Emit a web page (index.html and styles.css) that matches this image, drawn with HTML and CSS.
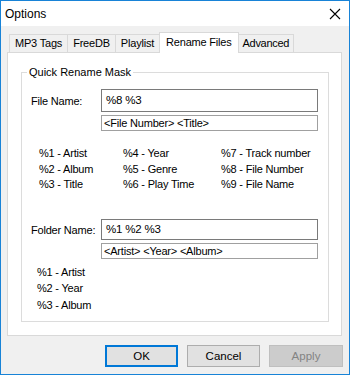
FILE: index.html
```html
<!DOCTYPE html>
<html lang="en">
<head>
  <meta charset="UTF-8">
  <title>Options</title>
  <link rel="stylesheet" href="styles.css">
</head>
<body>

  <div class="window">
    <div class="titlebar">
      <span class="title">Options</span>
      <svg class="close" width="12" height="12" viewBox="0 0 12 12">
        <path d="M1 1 L11 11 M11 1 L1 11" stroke="#000" stroke-width="1.1" fill="none"/>
      </svg>
    </div>

    <div class="client">
      <div class="tabs">
        <div class="tab">MP3 Tags</div>
        <div class="tab">FreeDB</div>
        <div class="tab">Playlist</div>
        <div class="tab active">Rename Files</div>
        <div class="tab">Advanced</div>
      </div>

      <div class="panel">
        <fieldset class="group">
          <legend>Quick Rename Mask</legend>

          <div class="field-row">
            <label>File Name:</label>
            <div class="fields">
              <div class="input">%8 %3</div>
              <div class="preview">&lt;File Number&gt; &lt;Title&gt;</div>
            </div>
          </div>

          <div class="codes codes-file">
            <span>%1 - Artist</span><span>%4 - Year</span><span>%7 - Track number</span>
            <span>%2 - Album</span><span>%5 - Genre</span><span>%8 - File Number</span>
            <span>%3 - Title</span><span>%6 - Play Time</span><span>%9 - File Name</span>
          </div>

          <div class="field-row folder-row">
            <label>Folder Name:</label>
            <div class="fields">
              <div class="input">%1 %2 %3</div>
              <div class="preview">&lt;Artist&gt; &lt;Year&gt; &lt;Album&gt;</div>
            </div>
          </div>

          <div class="codes codes-folder">
            <span>%1 - Artist</span>
            <span>%2 - Year</span>
            <span>%3 - Album</span>
          </div>
        </fieldset>
      </div>

      <div class="buttons">
        <button class="btn default">OK</button>
        <button class="btn">Cancel</button>
        <button class="btn" disabled>Apply</button>
      </div>
    </div>
  </div>

</body>
</html>
```

FILE: styles.css
```css
* {
  margin: 0;
  padding: 0;
  box-sizing: border-box;
}

html, body {
  width: 350px;
  height: 375px;
  background: #f0f0f0;
  font-family: "Liberation Sans", Arial, sans-serif;
  font-size: 11px;
  color: #000;
}

.window {
  width: 350px;
  height: 375px;
  border: 1px solid #1883d7;
  display: flex;
  flex-direction: column;
}

.titlebar {
  height: 25px;
  background: #fff;
  display: flex;
  align-items: center;
  justify-content: space-between;
  padding: 0 8px 0 4px;
}

.title {
  font-size: 12px;
}

.client {
  flex: 1;
  background: #f0f0f0;
  padding: 6px 7px 0 6px;
  display: flex;
  flex-direction: column;
}

/* tab strip */
.tabs {
  display: flex;
  align-items: flex-end;
  height: 20px;
  padding-left: 2px;
  position: relative;
  z-index: 1;
}

.tab {
  height: 18px;
  line-height: 17px;
  padding: 0 5px;
  border: 1px solid #d9d9d9;
  border-bottom: none;
  margin-left: -1px;
  background: #f0f0f0;
  letter-spacing: -0.2px;
}

.tab:first-child {
  margin-left: 0;
}

.tab:last-child {
  padding: 0 4px;
  letter-spacing: -0.3px;
}

.tab.active {
  height: 21px;
  margin-bottom: -1px;
  line-height: 18px;
  background: #fff;
  padding: 0 6px;
}

.panel {
  height: 284px;
  background: #fff;
  border: 1px solid #d9d9d9;
  padding: 13px 12px 0 13px;
}

/* group box */
.group {
  border: 1px solid #dcdcdc;
  padding: 10px 10px 7px 9px;
  height: 256px;
}

.group legend {
  margin-left: -4px;
  padding: 0 2px;
  line-height: 13px;
}

.field-row {
  display: flex;
  letter-spacing: -0.2px;
}

.field-row label {
  width: 70px;
  line-height: 25px;
}

.fields {
  flex: 1;
  display: flex;
  flex-direction: column;
  gap: 3px;
}

.input {
  height: 23px;
  border: 1px solid #7a7a7a;
  padding: 0 4px;
  line-height: 20px;
  font-size: 11.5px;
}

.preview {
  height: 16px;
  border: 1px solid #a0a0a0;
  padding: 0 2px;
  line-height: 14px;
}

.codes {
  letter-spacing: -0.2px;
  line-height: 15.5px;
}

.codes-file {
  display: grid;
  grid-template-columns: 84px 98px auto;
  padding-left: 8px;
  margin-top: 15px;
}

.folder-row {
  margin-top: 26px;
}

.folder-row label {
  line-height: 23px;
}

.folder-row .input {
  height: 21px;
  line-height: 18px;
}

.codes-folder {
  display: flex;
  flex-direction: column;
  padding-left: 6px;
  margin-top: 5px;
  line-height: 16.5px;
}

/* dialog buttons */
.buttons {
  display: flex;
  justify-content: flex-end;
  gap: 9px;
  margin-top: 9px;
  margin-right: -1px;
}

.btn {
  width: 73px;
  height: 22px;
  font-family: inherit;
  font-size: 11.5px;
  background: #e1e1e1;
  border: 1px solid #adadad;
  color: #000;
}

.btn.default {
  border: 2px solid #0078d7;
}

.btn:disabled {
  background: #cccccc;
  border-color: #bfbfbf;
  color: #838383;
  width: 74px;
}
```
